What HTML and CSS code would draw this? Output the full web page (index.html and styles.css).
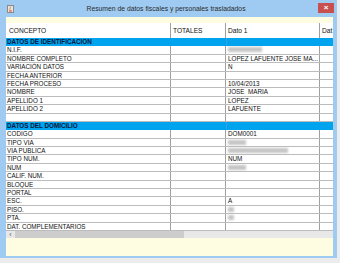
FILE: index.html
```html
<!DOCTYPE html>
<html lang="es">
<head>
<meta charset="utf-8">
<title>Resumen de datos fiscales y personales trasladados</title>
<link rel="stylesheet" href="styles.css">
</head>
<body>
<div class="window">
  <div class="titlebar">
    <svg class="appicon" width="7" height="8" viewBox="0 0 7 8">
      <rect x="0.5" y="0.5" width="6" height="7" fill="#e4e4e4" stroke="#8a8a8a"/>
      <path d="M2 5.5 h3 v1 h-3 z" fill="#d0561e"/>
      <path d="M3 1.5 q1 1 0 2 q-1 1 0.6 1.6" stroke="#e07020" stroke-width="0.8" fill="none"/>
    </svg>
    <div class="title">Resumen de datos fiscales y personales trasladados</div>
    <div class="close">×</div>
  </div>
  <div class="client">
    <div class="table">
      <div class="hrow">
        <div class="c c1">CONCEPTO</div><div class="c c2">TOTALES</div><div class="c c3">Dato 1</div><div class="c c4">Dat</div>
      </div>
      <div class="row section"><div class="c cs">DATOS DE IDENTIFICACION</div><div class="c c3"></div><div class="c c4"></div></div>
      <div class="row"><div class="c c1">N.I.F.</div><div class="c c2"></div><div class="c c3"><span class="blur blur-m"></span></div><div class="c c4"></div></div>
      <div class="row"><div class="c c1">NOMBRE COMPLETO</div><div class="c c2"></div><div class="c c3">LOPEZ LAFUENTE JOSE MA...</div><div class="c c4"></div></div>
      <div class="row"><div class="c c1">VARIACIÓN DATOS</div><div class="c c2"></div><div class="c c3">N</div><div class="c c4"></div></div>
      <div class="row"><div class="c c1">FECHA ANTERIOR</div><div class="c c2"></div><div class="c c3"></div><div class="c c4"></div></div>
      <div class="row"><div class="c c1">FECHA PROCESO</div><div class="c c2"></div><div class="c c3">10/04/2013</div><div class="c c4"></div></div>
      <div class="row"><div class="c c1">NOMBRE</div><div class="c c2"></div><div class="c c3">JOSE&nbsp; MARIA</div><div class="c c4"></div></div>
      <div class="row"><div class="c c1">APELLIDO 1</div><div class="c c2"></div><div class="c c3">LOPEZ</div><div class="c c4"></div></div>
      <div class="row"><div class="c c1">APELLIDO 2</div><div class="c c2"></div><div class="c c3">LAFUENTE</div><div class="c c4"></div></div>
      <div class="row"><div class="c c1"></div><div class="c c2"></div><div class="c c3"></div><div class="c c4"></div></div>
      <div class="row section"><div class="c cs">DATOS DEL DOMICILIO</div><div class="c c3"></div><div class="c c4"></div></div>
      <div class="row"><div class="c c1">CODIGO</div><div class="c c2"></div><div class="c c3">DOM0001</div><div class="c c4"></div></div>
      <div class="row"><div class="c c1">TIPO VIA</div><div class="c c2"></div><div class="c c3"><span class="blur blur-s"></span></div><div class="c c4"></div></div>
      <div class="row"><div class="c c1">VIA PUBLICA</div><div class="c c2"></div><div class="c c3"><span class="blur blur-l"></span></div><div class="c c4"></div></div>
      <div class="row"><div class="c c1">TIPO NUM.</div><div class="c c2"></div><div class="c c3">NUM</div><div class="c c4"></div></div>
      <div class="row"><div class="c c1">NUM</div><div class="c c2"></div><div class="c c3"><span class="blur blur-s"></span></div><div class="c c4"></div></div>
      <div class="row"><div class="c c1">CALIF. NUM.</div><div class="c c2"></div><div class="c c3"></div><div class="c c4"></div></div>
      <div class="row"><div class="c c1">BLOQUE</div><div class="c c2"></div><div class="c c3"></div><div class="c c4"></div></div>
      <div class="row"><div class="c c1">PORTAL</div><div class="c c2"></div><div class="c c3"></div><div class="c c4"></div></div>
      <div class="row"><div class="c c1">ESC.</div><div class="c c2"></div><div class="c c3">A</div><div class="c c4"></div></div>
      <div class="row"><div class="c c1">PISO.</div><div class="c c2"></div><div class="c c3"><span class="blur blur-xs"></span></div><div class="c c4"></div></div>
      <div class="row"><div class="c c1">PTA.</div><div class="c c2"></div><div class="c c3"><span class="blur blur-xs"></span></div><div class="c c4"></div></div>
      <div class="row"><div class="c c1">DAT. COMPLEMENTARIOS</div><div class="c c2"></div><div class="c c3"></div><div class="c c4"></div></div>
    </div>
    <div class="hscroll">
      <div class="arrow">‹</div>
      <div class="thumb"></div>
    </div>
  </div>
</div>
</body>
</html>
```

FILE: styles.css
```css
html, body {
  margin: 0;
  padding: 0;
}
body {
  background: #ececec;
  font-family: "Liberation Sans", Arial, sans-serif;
  color: #111;
}
.window {
  width: 337px;
  height: 258px;
  background: #9fcbf3;
  display: flex;
  flex-direction: column;
}
.titlebar {
  height: 17px;
  flex: none;
  display: flex;
  align-items: flex-start;
}
.appicon {
  flex: none;
  margin: 5px 0 0 7px;
  display: block;
}
.title {
  flex: 1;
  text-align: center;
  font-size: 6.8px;
  line-height: 12px;
  padding-top: 3px;
  color: #2b2b2b;
  white-space: nowrap;
}
.close {
  flex: none;
  width: 16px;
  height: 10px;
  margin: 3px 3px 0 0;
  background: #c7504f;
  color: #fff;
  font-size: 8px;
  line-height: 10px;
  text-align: center;
  font-weight: bold;
}
.client {
  flex: 1;
  margin: 0 4px 2px 6px;
  background: #fffde1;
  padding-top: 6px;
  display: flex;
  flex-direction: column;
}
.table {
  flex: none;
  background: #fff;
}
.hrow {
  display: flex;
  height: 15px;
  font-size: 6.6px;
  line-height: 15px;
}
.row {
  display: flex;
  height: 8.4px;
  box-sizing: border-box;
  border-bottom: 1px solid #bcbcbc;
  font-size: 6.3px;
  line-height: 7.4px;
}
.c {
  box-sizing: border-box;
  white-space: nowrap;
  overflow: hidden;
  border-right: 1px solid #a0a0a0;
}
.c1 { width: 165px; padding-left: 1px; }
.hrow .c1 { padding-left: 3px; }
.c2 { width: 55px; padding-left: 2px; }
.c3 { width: 94px; padding-left: 2px; }
.c4 { flex: 1; border-right: none; padding-left: 2px; }
.cs { width: 220px; padding-left: 1px; border-right: none; }
.section {
  background: #00a4ee;
  border-bottom-color: #00a4ee;
  font-weight: bold;
  color: #04163a;
}
.section .c3 { border-right: none; border-left: 1px solid #3a9ed8; }
.blur {
  display: inline-block;
  vertical-align: top;
  margin-top: 1px;
  height: 5px;
  background: #c6c6c6;
  filter: blur(0.8px);
}
.blur-xs { width: 6px; }
.blur-s { width: 18px; }
.blur-m { width: 34px; }
.blur-l { width: 60px; }
.hscroll {
  flex: none;
  height: 7px;
  background: #e8e8e8;
  display: flex;
}
.arrow {
  width: 9px;
  font-size: 7px;
  line-height: 7px;
  text-align: center;
  color: #555;
}
.thumb {
  width: 169px;
  background: #cdcdcd;
}
```
